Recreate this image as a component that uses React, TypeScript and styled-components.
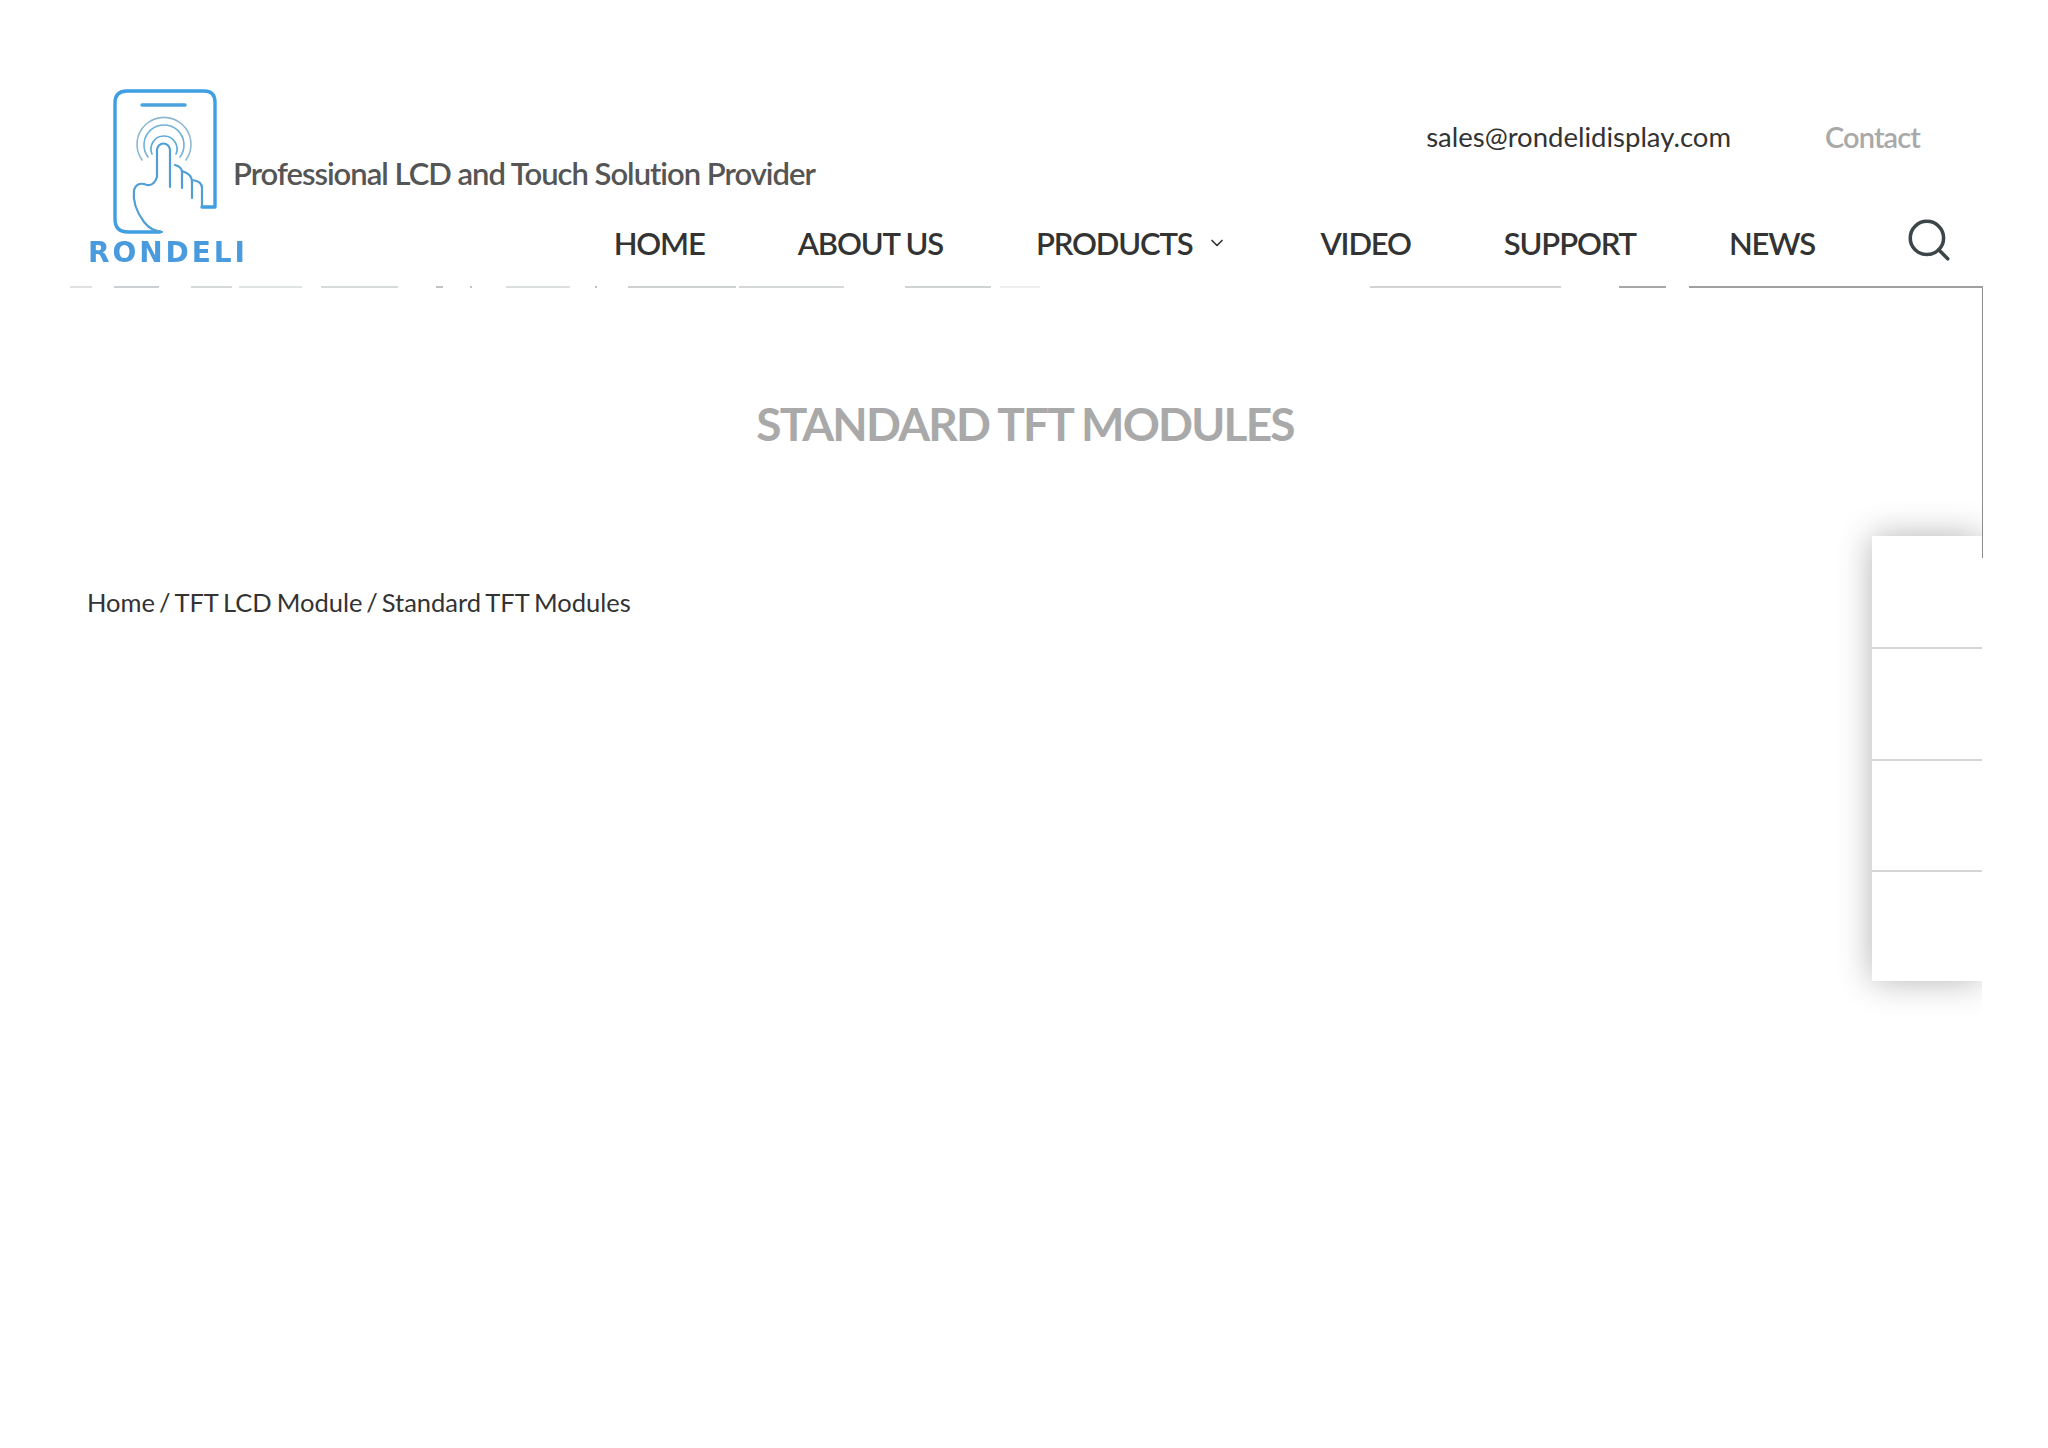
import { createGlobalStyle } from 'styled-components';
import styled from 'styled-components';
import { ChevronDown, Search } from 'lucide-react';

const GlobalStyle = createGlobalStyle`
  html, body {
    margin: 0;
    background: #fff;
  }
  body {
    font-family: Lato, "Open Sans", sans-serif;
    color: #333;
  }
`;

const Page = styled.div`
  position: relative;
  width: 1983px;
  height: 1448px;
`;

const Header = styled.header`
  display: grid;
  grid-template-columns: 145px 1fr;
  grid-template-rows: 109px 29px 40px;
  height: 287px;
  box-sizing: border-box;
  padding: 85px 0 0 88px;
`;

const Brand = styled.a`
  grid-column: 1;
  grid-row: 1 / 4;
  display: flex;
  flex-direction: column;
  filter: blur(0.5px);

  svg {
    flex: none;
  }
`;

const BrandName = styled.span`
  font-family: "DejaVu Sans", sans-serif;
  font-size: 28px;
  line-height: 25px;
  font-weight: 700;
  letter-spacing: 2.9px;
  color: #4a9ade;
  white-space: nowrap;
`;

const Tagline = styled.div`
  grid-column: 2;
  grid-row: 1;
  align-self: end;
  margin-bottom: 1px;
  font-size: 31px;
  line-height: 40px;
  font-weight: 600;
  letter-spacing: -1px;
  color: #555;
  white-space: nowrap;
`;

const TopLinks = styled.div`
  grid-column: 2;
  grid-row: 1;
  align-self: end;
  margin-bottom: 37px;
  display: flex;
  justify-content: flex-end;
  gap: 94px;
  padding-right: 63px;
  line-height: 40px;
`;

const Email = styled.span`
  font-size: 27.5px;
  color: #333;
`;

const ContactLink = styled.span`
  font-size: 29px;
  font-weight: 600;
  letter-spacing: -0.9px;
  color: #a9a9a9;
`;

const Nav = styled.nav`
  grid-column: 2;
  grid-row: 3;
  display: flex;
  justify-content: flex-end;
  align-items: center;
  gap: 93px;
  padding-right: 29px;
`;

const NavItem = styled.span`
  display: flex;
  align-items: center;
  gap: 15px;
  font-size: 31px;
  font-weight: 600;
  letter-spacing: -1.15px;
  white-space: nowrap;
  color: #333;
`;

const SearchIcon = styled(Search)`
  display: block;
  margin: -6px 0 0 -4px;
  color: #3c4548;
`;

const Banner = styled.section`
  position: relative;
  z-index: 1;
  margin-left: 68px;
  height: 271px;
  box-sizing: border-box;
  border-right: 1px solid #8c8c8c;
  display: flex;
  justify-content: center;
  padding-top: 110px;
`;

const BannerRule = styled.div<{ $stops: string }>`
  position: absolute;
  top: -1px;
  left: 0;
  right: -1px;
  height: 2px;
  background: linear-gradient(to right, ${(p) => p.$stops});
`;

const Title = styled.h1`
  margin: 0;
  font-size: 46px;
  line-height: 54px;
  font-weight: 700;
  letter-spacing: -1.8px;
  color: #a9a9a9;
`;

const Breadcrumb = styled.div`
  margin: 26px 0 0 87px;
  font-size: 25.5px;
  line-height: 36px;
  word-spacing: -1.6px;
  color: #333;
`;

const CrumbSeparator = styled.span`
  word-spacing: -2.6px;
`;

const SidePanel = styled.aside`
  position: absolute;
  top: 536px;
  right: 1px;
  width: 110px;
  background: #fff;
  box-shadow: 0 0 32px rgba(0, 0, 0, 0.3);
  clip-path: inset(-40px 0 -40px -40px);
`;

const SideRow = styled.div`
  height: 111.25px;
  box-sizing: border-box;
  & + & {
    border-top: 2px solid #d6d6d6;
  }
`;

// the broken rule under the header, [start, end, colour] in px from its left edge
const ruleSegments: [number, number, string][] = [
  [2, 24, '#dfe2e2'], [46, 91, '#ccd0d2'], [123, 164, '#d6d9d9'], [171, 234, '#e0e3e3'],
  [253, 330, '#d8dbdb'], [368, 375, '#c0c4c4'], [402, 404, '#c0c4c4'], [438, 502, '#dcdfdf'],
  [527, 529, '#c0c4c4'], [560, 668, '#cdd1d2'], [671, 776, '#d4d9d6'], [837, 923, '#d0d4d4'],
  [932, 972, '#eeeeee'], [1302, 1493, '#d4d4d4'], [1551, 1598, '#a8a8a8'], [1621, 1915, '#a0a0a0'],
];

const ruleStops = ruleSegments
  .flatMap(([start, end, colour], i) => {
    const next = i === 0 ? 'transparent 0px, ' : '';
    return `${next}transparent ${start}px, ${colour} ${start}px, ${colour} ${end}px, transparent ${end}px`;
  })
  .join(', ');

const RondeliMark = () => (
  <svg width="145" height="155" viewBox="88 85 145 155" fill="none" strokeLinecap="round" strokeLinejoin="round">
    <path d="M160 232 H128 Q115 232 115 219 V103 Q115 91 127 91 H204 Q215 91 215 102 V207 H202" stroke="#3f9fe2" strokeWidth="3.4" />
    <path d="M142 105 H185" stroke="#4aa3dd" strokeWidth="3.5" />
    <path d="M142 160 A27 27 0 1 1 186 160" stroke="#8fb8d0" strokeWidth="1.6" />
    <path d="M148 157 A20 20 0 1 1 180 157" stroke="#6fb0d8" strokeWidth="1.6" />
    <path d="M152 154 A13 13 0 1 1 176 154" stroke="#5aa8dc" strokeWidth="1.6" />
    <path
      d="M170 187 V150 A6.5 6.5 0 0 0 157 150 V177 Q154 186 147 185 Q137 181 134 190 Q132 206 144 222 Q151 231 162 232"
      stroke="#4f9fd6"
      strokeWidth="2.2"
    />
    <path d="M175 165 Q182 167 182 172 V188 M182 171 Q192 174 192 182 V198 M192 180 Q202 181 202 188 V207" stroke="#4f9fd6" strokeWidth="2.2" />
  </svg>
);

const navItems = ['HOME', 'ABOUT US', 'PRODUCTS', 'VIDEO', 'SUPPORT', 'NEWS'];

export default function App() {
  return (
    <Page>
      <GlobalStyle />
      <Header>
        <Brand>
          <RondeliMark />
          <BrandName>RONDELI</BrandName>
        </Brand>
        <Tagline>Professional LCD and Touch Solution Provider</Tagline>
        <TopLinks>
          <Email>sales@rondelidisplay.com</Email>
          <ContactLink>Contact</ContactLink>
        </TopLinks>
        <Nav>
          {navItems.map((item) => (
            <NavItem key={item}>
              {item}
              {item === 'PRODUCTS' && <ChevronDown size={20} strokeWidth={2} />}
            </NavItem>
          ))}
          <SearchIcon size={50} strokeWidth={1.7} />
        </Nav>
      </Header>
      <Banner>
        <BannerRule $stops={ruleStops} />
        <Title>STANDARD TFT MODULES</Title>
      </Banner>
      <Breadcrumb>
        Home<CrumbSeparator> / </CrumbSeparator>TFT LCD Module<CrumbSeparator> / </CrumbSeparator>Standard TFT Modules
      </Breadcrumb>
      <SidePanel>
        <SideRow />
        <SideRow />
        <SideRow />
        <SideRow />
      </SidePanel>
    </Page>
  );
}
